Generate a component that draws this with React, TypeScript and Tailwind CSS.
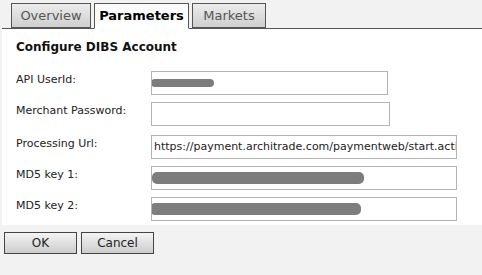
import React from 'react';

const font = { fontFamily: '"DejaVu Sans", Verdana, sans-serif' };

const Field: React.FC<{ label: string; width: string; mt: string; children?: React.ReactNode }> = ({ label, width, mt, children }) => (
  <div className={`flex items-start ${mt}`}>
    <div className="w-[149px] pl-[14px] pt-[1px] text-[11px] leading-[16px] text-[#222]">{label}</div>
    <div className={`${width} h-[24px] border border-[#b4b4b4] bg-white relative overflow-hidden flex items-center`}>
      {children}
    </div>
  </div>
);

const Blob: React.FC<{ w: string; h: string; left?: string }> = ({ w, h, left = 'left-0' }) => (
  <div className={`absolute ${left} ${w} ${h} rounded-[5px] bg-[#7d7d7d]`} />
);

export default function App() {
  return (
    <div className="w-[482px] h-[275px] bg-[#f2f2f2] overflow-hidden" style={font}>
      {/* Tabs */}
      <div className="ml-[2px] pt-[3px] pl-[9px] flex border-b border-[#555]">
        <div className="w-[80px] h-[25px] -mb-px border border-[#555] bg-gradient-to-b from-[#ececec] to-[#cfcfcf] flex items-center justify-center text-[13px] text-[#555]">
          Overview
        </div>
        <div className="ml-[3px] w-[95px] h-[26px] -mb-px border border-[#555] border-b-white bg-gradient-to-b from-[#fafafa] to-white flex items-center justify-center text-[13px] font-bold text-black">
          Parameters
        </div>
        <div className="ml-[3px] w-[74px] h-[25px] -mb-px border border-[#555] bg-gradient-to-b from-[#ececec] to-[#cfcfcf] flex items-center justify-center text-[13px] text-[#555]">
          Markets
        </div>
      </div>

      {/* Panel */}
      <div className="ml-[2px] h-[196px] bg-white pt-[9px]">
        <div className="pl-[14px] text-[12px] font-bold text-[#111]">Configure DIBS Account</div>
        <Field label="API UserId:" width="w-[237px]" mt="mt-[15px]">
          <Blob w="w-[63px]" h="h-[8px]" left="-left-px" />
        </Field>
        <Field label="Merchant Password:" width="w-[239px]" mt="mt-[7px]" />
        <Field label="Processing Url:" width="w-[306px]" mt="mt-[9px]">
          <span className="pl-[2px] whitespace-nowrap text-[11px] text-[#222]">
            https://payment.architrade.com/paymentweb/start.action
          </span>
        </Field>
        <Field label="MD5 key 1:" width="w-[306px]" mt="mt-[7px]">
          <Blob w="w-[212px]" h="h-[12px]" />
        </Field>
        <Field label="MD5 key 2:" width="w-[306px]" mt="mt-[7px]">
          <Blob w="w-[211px]" h="h-[12px]" left="-left-[2px]" />
        </Field>
      </div>

      {/* Buttons */}
      <div className="mt-[7px] pl-[4px] flex gap-[4px]">
        <button className="w-[73px] h-[22px] border border-[#444] bg-gradient-to-b from-[#f4f4f4] to-[#cdcdcd] text-[12px] text-[#222]">
          OK
        </button>
        <button className="w-[73px] h-[22px] border border-[#444] bg-gradient-to-b from-[#f4f4f4] to-[#cdcdcd] text-[12px] text-[#222]">
          Cancel
        </button>
      </div>
    </div>
  );
}
